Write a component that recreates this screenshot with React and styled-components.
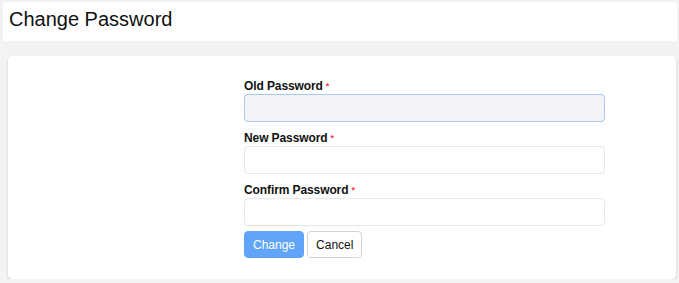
import styled, { createGlobalStyle } from "styled-components"

const GlobalStyle = createGlobalStyle`
  html, body {
    margin: 0;
    background-color: #f2f3f5;
    font-family: "Liberation Sans", Arial, sans-serif;
    color: #111827;
  }
`

const Page = styled.div`
  padding: 2px 2px 0 3px;
`

const Header = styled.header`
  background-color: white;
  height: 39px;
  box-sizing: border-box;
  padding: 5px 6px 0;
  h1 {
    margin: 0;
    font-size: 20px;
    line-height: 24px;
    font-weight: normal;
    color: #111;
  }
`

const Card = styled.main`
  margin: 15px 1px 0 5px;
  background-color: white;
  border-radius: 4px;
  box-shadow: 0 1px 2px rgba(0, 0, 0, 0.22);
  padding: 22px 0 21px 236px;
`

const Form = styled.form`
  width: 361px;
  display: flex;
  flex-direction: column;
  gap: 8px;
`

const Field = styled.div`
  display: flex;
  flex-direction: column;
`

const Label = styled.label`
  font-size: 12px;
  line-height: 16px;
  font-weight: bold;
  color: #111;
  letter-spacing: -0.1px;
`

const Required = styled.span`
  color: #ef4444;
  font-size: 9px;
  margin-left: 3px;
  vertical-align: 1px;
`

const Input = styled.input`
  box-sizing: border-box;
  height: 28px;
  width: 100%;
  border-radius: 4px;
  border: 1px solid ${(p) => (p.$focused ? "#a5c8f7" : "#e5e7eb")};
  background-color: ${(p) => (p.$focused ? "#f2f3f6" : "white")};
  outline: none;
  padding: 0 8px;
  font-size: 12px;
`

const Actions = styled.div`
  display: flex;
  gap: 3px;
  margin-top: -3px;
`

const Button = styled.button`
  height: 27px;
  padding: 0 8px;
  border-radius: 4px;
  font-family: inherit;
  font-size: 12px;
  cursor: pointer;
  border: 1px solid ${(p) => (p.$primary ? "#60a5fa" : "#cfd3d9")};
  background-color: ${(p) => (p.$primary ? "#60a5fa" : "white")};
  color: ${(p) => (p.$primary ? "white" : "#111")};
`

const fields = [
  { name: "old", label: "Old Password", focused: true },
  { name: "new", label: "New Password" },
  { name: "confirm", label: "Confirm Password" },
]

export default function App() {
  return (
    <>
      <GlobalStyle />
      <Page>
        <Header>
          <h1>Change Password</h1>
        </Header>

        <Card>
          <Form onSubmit={(e) => e.preventDefault()}>
            {fields.map((f) => (
              <Field key={f.name}>
                <Label htmlFor={f.name}>
                  {f.label}
                  <Required>*</Required>
                </Label>
                <Input id={f.name} type="password" $focused={f.focused} />
              </Field>
            ))}
            <Actions>
              <Button type="submit" $primary>
                Change
              </Button>
              <Button type="button">Cancel</Button>
            </Actions>
          </Form>
        </Card>
      </Page>
    </>
  )
}
